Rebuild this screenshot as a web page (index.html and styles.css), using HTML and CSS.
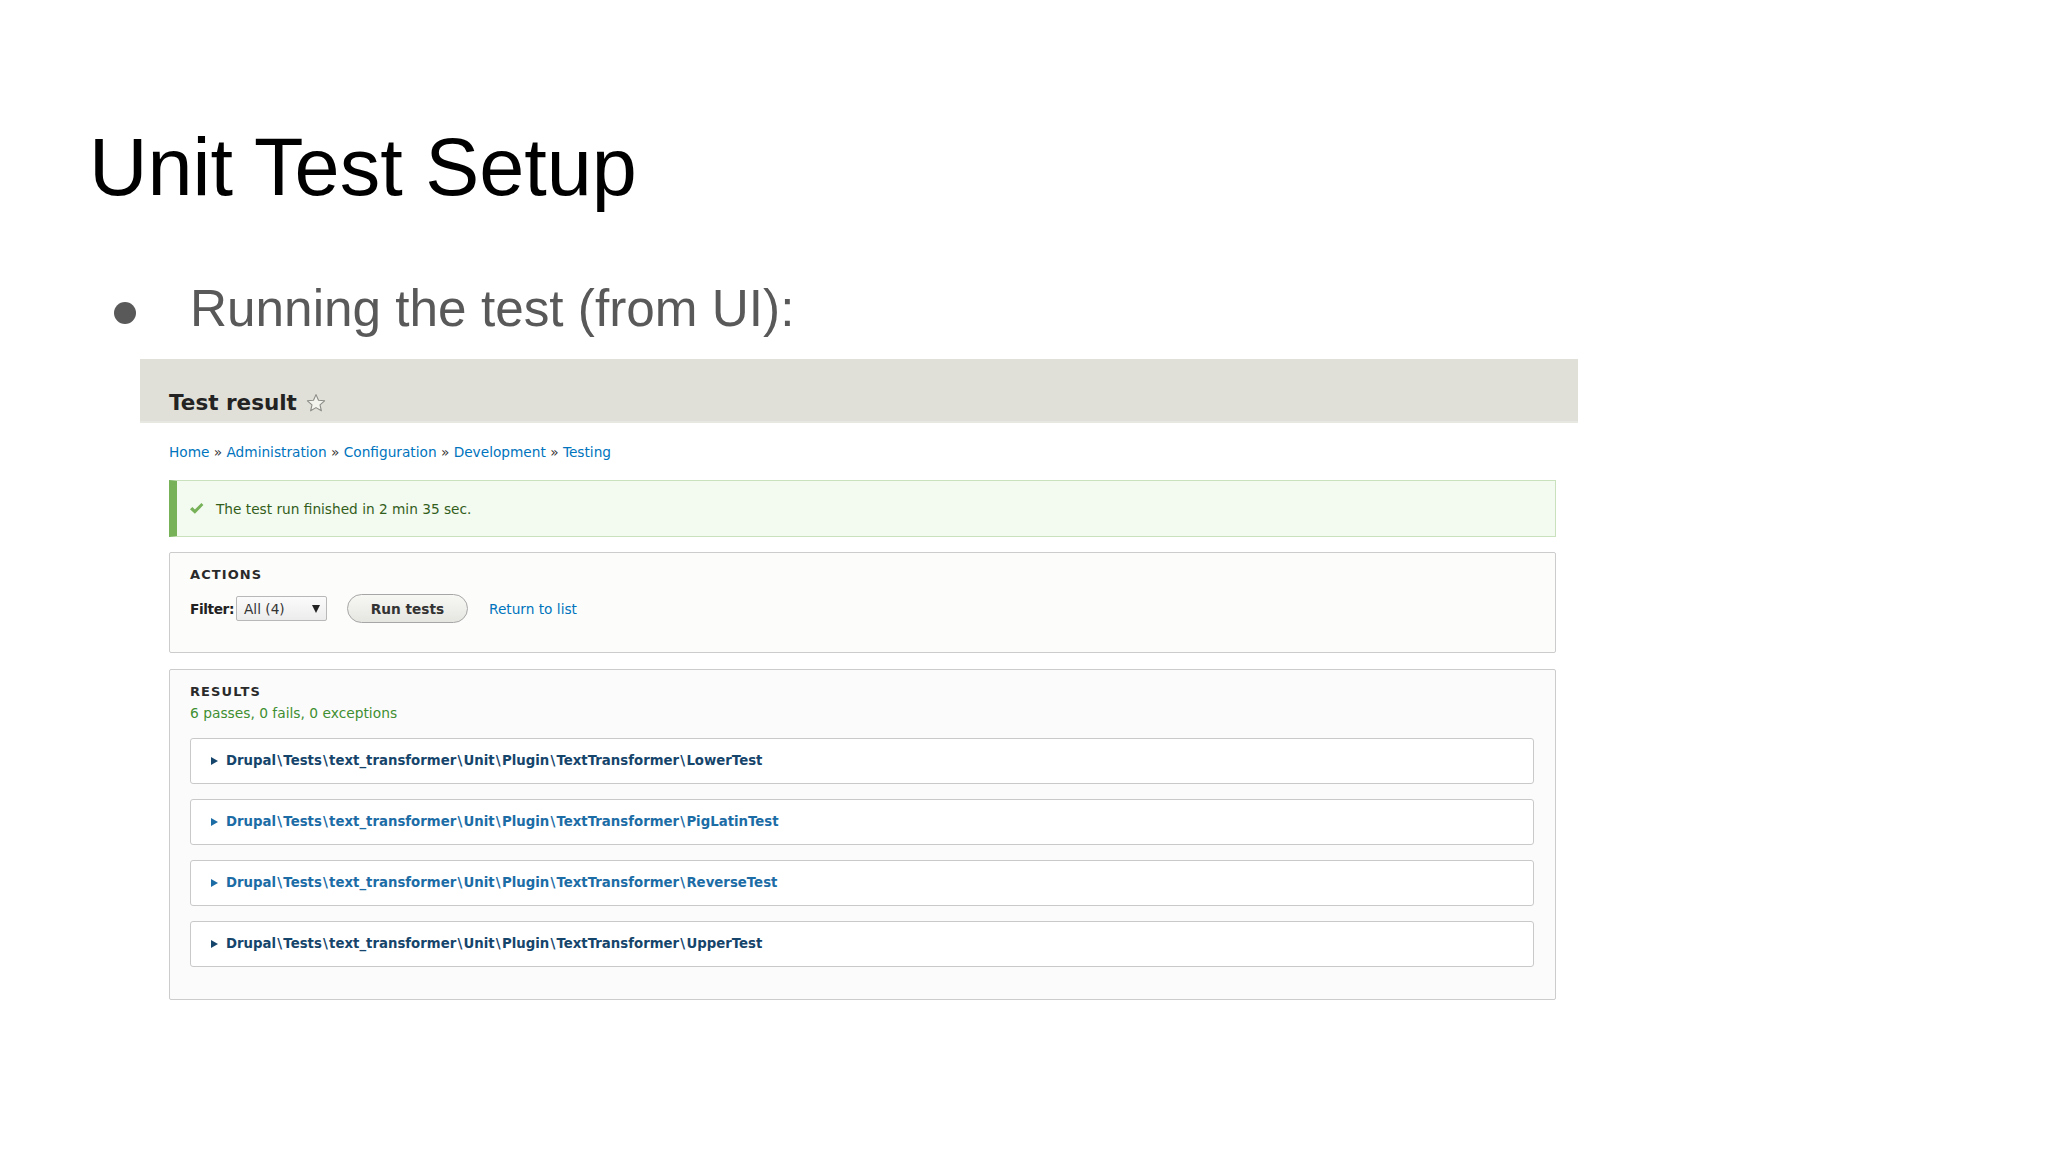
FILE: index.html
```html
<!DOCTYPE html>
<html>
<head>
<meta charset="utf-8">
<link rel="stylesheet" href="styles.css">
</head>
<body>
<div class="slide">
  <h1 class="title">Unit Test Setup</h1>
  <div class="bullet-row">
    <span class="dot"></span>
    <span class="bullet-text">Running the test (from UI):</span>
  </div>
  <div class="drupal">
    <div class="d-header">
      <h2 class="page-title">Test result
        <svg class="star" width="20" height="20" viewBox="0 0 20 20"><path d="M10 1.6 L12.5 7.3 L18.6 7.8 L14 11.8 L15.4 17.8 L10 14.6 L4.6 17.8 L6 11.8 L1.4 7.8 L7.5 7.3 Z" fill="#f4f4ef" stroke="#8c8c88" stroke-width="1.1" stroke-linejoin="round"/></svg>
      </h2>
    </div>
    <div class="d-content">
      <nav class="breadcrumb"><a href="#">Home</a> » <a href="#">Administration</a> » <a href="#">Configuration</a> » <a href="#">Development</a> » <a href="#">Testing</a></nav>
      <div class="msg">
        <svg class="check" width="15" height="13" viewBox="0 0 15 13"><path d="M1 7.2 L3.4 4.9 L5.9 7.6 L12.4 0.9 L14.4 3 L5.9 11.8 Z" fill="#77b259"/></svg>
        <span>The test run finished in 2 min 35 sec.</span>
      </div>
      <div class="panel actions">
        <div class="panel-title">ACTIONS</div>
        <div class="filter-row">
          <span class="label">Filter:</span>
          <div class="select"><span>All (4)</span><span class="arrow"></span></div>
          <button class="btn">Run tests</button>
          <a class="link" href="#">Return to list</a>
        </div>
      </div>
      <div class="panel results">
        <div class="panel-title">RESULTS</div>
        <div class="summary">6 passes, 0 fails, 0 exceptions</div>
        <div class="items">
          <div class="item dark"><span class="tri"></span><span>Drupal<span class="bs">\</span>Tests<span class="bs">\</span>text_transformer<span class="bs">\</span>Unit<span class="bs">\</span>Plugin<span class="bs">\</span>TextTransformer<span class="bs">\</span>LowerTest</span></div>
          <div class="item light"><span class="tri"></span><span>Drupal<span class="bs">\</span>Tests<span class="bs">\</span>text_transformer<span class="bs">\</span>Unit<span class="bs">\</span>Plugin<span class="bs">\</span>TextTransformer<span class="bs">\</span>PigLatinTest</span></div>
          <div class="item light"><span class="tri"></span><span>Drupal<span class="bs">\</span>Tests<span class="bs">\</span>text_transformer<span class="bs">\</span>Unit<span class="bs">\</span>Plugin<span class="bs">\</span>TextTransformer<span class="bs">\</span>ReverseTest</span></div>
          <div class="item dark"><span class="tri"></span><span>Drupal<span class="bs">\</span>Tests<span class="bs">\</span>text_transformer<span class="bs">\</span>Unit<span class="bs">\</span>Plugin<span class="bs">\</span>TextTransformer<span class="bs">\</span>UpperTest</span></div>
        </div>
      </div>
    </div>
  </div>
</div>
</body>
</html>
```

FILE: styles.css
```css
* { box-sizing: border-box; }
html, body { margin: 0; padding: 0; background: #ffffff; }
.slide {
  width: 2048px;
  height: 1152px;
  padding-top: 127px;
  overflow: hidden;
}
.title {
  margin: 0 0 0 89px;
  font-family: "Liberation Sans", Arial, sans-serif;
  font-weight: normal;
  font-size: 81px;
  line-height: 81px;
  color: #000000;
}
.bullet-row {
  display: flex;
  align-items: flex-start;
  margin: 75px 0 0 114px;
  height: 51px;
}
.dot {
  width: 22px;
  height: 22px;
  border-radius: 50%;
  background: #595959;
  margin-top: 19px;
  flex: none;
}
.bullet-text {
  margin-left: 54px;
  font-family: "Liberation Sans", Arial, sans-serif;
  font-size: 51.3px;
  line-height: 51px;
  color: #595959;
}
.drupal {
  margin: 25px 0 0 140px;
  width: 1438px;
  font-family: "DejaVu Sans", "Liberation Sans", sans-serif;
}
.d-header {
  height: 64px;
  background: #e0e0d8;
  border-bottom: 2px solid #e8e8e3;
  padding: 31px 0 0 29px;
}
.page-title {
  margin: 0;
  display: flex;
  align-items: center;
  gap: 9px;
  font-size: 21.5px;
  line-height: 26px;
  font-weight: bold;
  color: #232323;
}
.star { display: block; }
.d-content {
  padding: 19px 22px 0 29px;
}
.breadcrumb {
  font-size: 13.7px;
  line-height: 20px;
  color: #333333;
}
.breadcrumb a, .link {
  color: #0074bd;
  text-decoration: none;
}
.msg {
  margin-top: 18px;
  height: 57px;
  border: 1px solid #c9e1bd;
  border-left: 8px solid #77b259;
  background: #f3faef;
  display: flex;
  align-items: center;
  gap: 12px;
  padding-left: 12px;
  font-size: 13.7px;
  line-height: 20px;
  color: #325e1c;
}
.check { display: block; flex: none; }
.panel {
  margin-top: 15px;
  border: 1px solid #cccccc;
  border-radius: 2px;
  background: #fcfcfa;
  padding: 13.5px 21px 0 20px;
}
.actions { height: 101px; }
.results { height: 331px; margin-top: 16px; background: #fcfbfb; }
.panel-title {
  font-size: 13px;
  line-height: 16px;
  font-weight: bold;
  letter-spacing: 1.1px;
  color: #2a2a2a;
}
.filter-row {
  display: flex;
  align-items: center;
  height: 29px;
  margin-top: 11.5px;
  font-size: 13.7px;
}
.label {
  font-weight: bold;
  color: #222222;
  letter-spacing: -0.4px;
  margin-right: 2px;
}
.select {
  width: 91px;
  height: 25px;
  border: 1px solid #b8b8b8;
  border-radius: 2px;
  background: linear-gradient(#fbfbfb, #ececec);
  display: flex;
  align-items: center;
  justify-content: space-between;
  padding: 0 6px 0 7px;
  color: #333333;
}
.arrow {
  width: 0;
  height: 0;
  border-left: 4.5px solid transparent;
  border-right: 4.5px solid transparent;
  border-top: 8px solid #222222;
}
.btn {
  margin-left: 20px;
  width: 121px;
  height: 29px;
  border: 1px solid #a6a6a6;
  border-radius: 15px;
  background: linear-gradient(#f7f7f4, #e6e6e1);
  font-family: "DejaVu Sans", "Liberation Sans", sans-serif;
  font-size: 13.7px;
  font-weight: bold;
  color: #333333;
  padding: 0;
}
.link { margin-left: 21px; }
.summary {
  margin-top: 3px;
  font-size: 13.8px;
  line-height: 20px;
  color: #3f8f32;
}
.items {
  margin-top: 15.5px;
  display: flex;
  flex-direction: column;
  gap: 15px;
}
.item {
  height: 46px;
  border: 1px solid #c9c9c9;
  border-radius: 3px;
  background: #ffffff;
  display: flex;
  align-items: center;
  gap: 8px;
  padding-left: 20px;
  font-size: 13.3px;
  line-height: 20px;
  font-weight: bold;
}
.bs { padding: 0 1.2px; }
.item.dark { color: #16456c; }
.item.light { color: #1c6ca6; }
.tri {
  width: 0;
  height: 0;
  border-top: 4px solid transparent;
  border-bottom: 4px solid transparent;
  border-left: 7px solid currentColor;
}
```
